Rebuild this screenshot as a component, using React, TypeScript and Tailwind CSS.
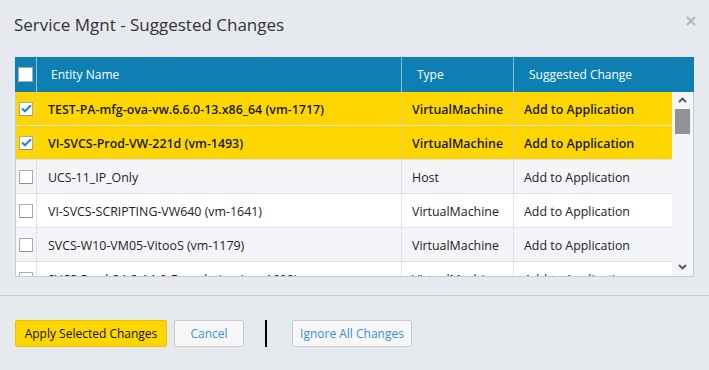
import React from "react";

const rows = [
  { name: "TEST-PA-mfg-ova-vw.6.6.0-13.x86_64 (vm-1717)", type: "VirtualMachine", change: "Add to Application", sel: true },
  { name: "VI-SVCS-Prod-VW-221d (vm-1493)", type: "VirtualMachine", change: "Add to Application", sel: true },
  { name: "UCS-11_IP_Only", type: "Host", change: "Add to Application", sel: false },
  { name: "VI-SVCS-SCRIPTING-VW640 (vm-1641)", type: "VirtualMachine", change: "Add to Application", sel: false },
  { name: "SVCS-W10-VM05-VitooS (vm-1179)", type: "VirtualMachine", change: "Add to Application", sel: false },
  { name: "SVCS-Prod-24-2-14-0-Foundation (vm-1608)", type: "VirtualMachine", change: "Add to Application", sel: false },
];

function Check({ checked }: { checked: boolean }) {
  return (
    <div className="w-[14px] h-[14px] bg-white border border-[#a9abae] border-b-[#8d8f92] flex items-center justify-center">
      {checked && (
        <svg width="11" height="9" viewBox="0 0 11 9">
          <path d="M1 4.5 L4 7.2 L10 1.3" fill="none" stroke="#2b86d3" strokeWidth="2.2" />
        </svg>
      )}
    </div>
  );
}

export default function App() {
  return (
    <div
      className="w-[709px] h-[370px] bg-[#e6e9ed] text-[#222] overflow-hidden flex flex-col"
      style={{ fontFamily: '"Open Sans", "Noto Sans", sans-serif' }}
    >
      <div className="h-[57px] flex items-start justify-between pl-[14px] pr-[13px] pt-[13px]">
        <div className="text-[17px] leading-[24px] text-[#333]">Service Mgnt - Suggested Changes</div>
        <svg className="mt-[3px]" width="10" height="10" viewBox="0 0 10 10">
          <path d="M1 1 L9 9 M9 1 L1 9" stroke="#b3b6ba" strokeWidth="2" />
        </svg>
      </div>

      <div className="mx-[15px] w-[679px]">
        <div className="h-[35px] bg-[#0d7fb2] flex items-center text-white text-[12px]">
          <div className="w-[22px] h-full flex items-center justify-center border-r border-[#8fbfd6]">
            <div className="w-[15px] h-[15px] bg-white border border-[#a9abae]" />
          </div>
          <div className="w-[365px] h-full flex items-center pl-[14px] border-r border-[#8fbfd6]">Entity Name</div>
          <div className="w-[112px] h-full flex items-center pl-[15px] border-r border-[#8fbfd6]">Type</div>
          <div className="flex-1 h-full flex items-center pl-[15px]">Suggested Change</div>
        </div>

        <div className="h-[185px] border border-t-0 border-[#c6c9cd] flex overflow-hidden">
          <div className="w-[656px] flex flex-col">
            {rows.map((r, i) => (
              <div
                key={i}
                className={
                  "h-[34px] shrink-0 flex items-center text-[12.4px] border-b border-[#dfe2e6] " +
                  (r.sel ? "bg-[#ffd600] font-semibold text-[#1a1a1a]" : i % 2 === 0 ? "bg-[#f3f5f9]" : "bg-white")
                }
              >
                <div className="w-[21px] h-full flex items-center justify-center border-r border-dotted border-[#c9cbcf]">
                  <Check checked={r.sel} />
                </div>
                <div className="w-[365px] h-full flex items-center pl-[11px] pt-[3px] border-r border-dotted border-[#c9cbcf] whitespace-nowrap">
                  {r.name}
                </div>
                <div className="w-[112px] h-full flex items-center pl-[10px] pt-[3px] border-r border-dotted border-[#c9cbcf] whitespace-nowrap">
                  {r.type}
                </div>
                <div className="flex-1 h-full flex items-center pl-[10px] pt-[3px] whitespace-nowrap">{r.change}</div>
              </div>
            ))}
          </div>
          <div className="flex-1 bg-[#f3f5f9] flex flex-col items-center relative">
            <svg className="mt-[5px]" width="9" height="6" viewBox="0 0 9 6">
              <path d="M1 5 L4.5 1.5 L8 5" fill="none" stroke="#555" strokeWidth="1.8" />
            </svg>
            <div className="mt-[6px] w-[15px] h-[25px] bg-[#8f9297]" />
            <svg className="absolute bottom-[6px]" width="9" height="6" viewBox="0 0 9 6">
              <path d="M1 1 L4.5 4.5 L8 1" fill="none" stroke="#555" strokeWidth="1.8" />
            </svg>
          </div>
        </div>
      </div>

      <div className="mt-[18px] border-t border-[#c6c9cd]" />

      <div className="flex items-center pl-[15px] mt-[24px] h-[27px]">
        <button className="h-[27px] w-[152px] bg-[#ffd600] border border-[#e8c400] rounded-[2px] text-[12px] text-[#111]">
          Apply Selected Changes
        </button>
        <button className="ml-[7px] h-[27px] w-[70px] bg-[#f7f7f7] border border-[#c8cacd] rounded-[2px] text-[12px] text-[#3a8fcf]">
          Cancel
        </button>
        <div className="ml-[21px] w-[2px] h-[27px] bg-black" />
        <button className="ml-[25px] h-[27px] w-[120px] bg-[#f7f7f7] border border-[#c8cacd] rounded-[2px] text-[12px] text-[#3a8fcf]">
          Ignore All Changes
        </button>
      </div>
    </div>
  );
}
